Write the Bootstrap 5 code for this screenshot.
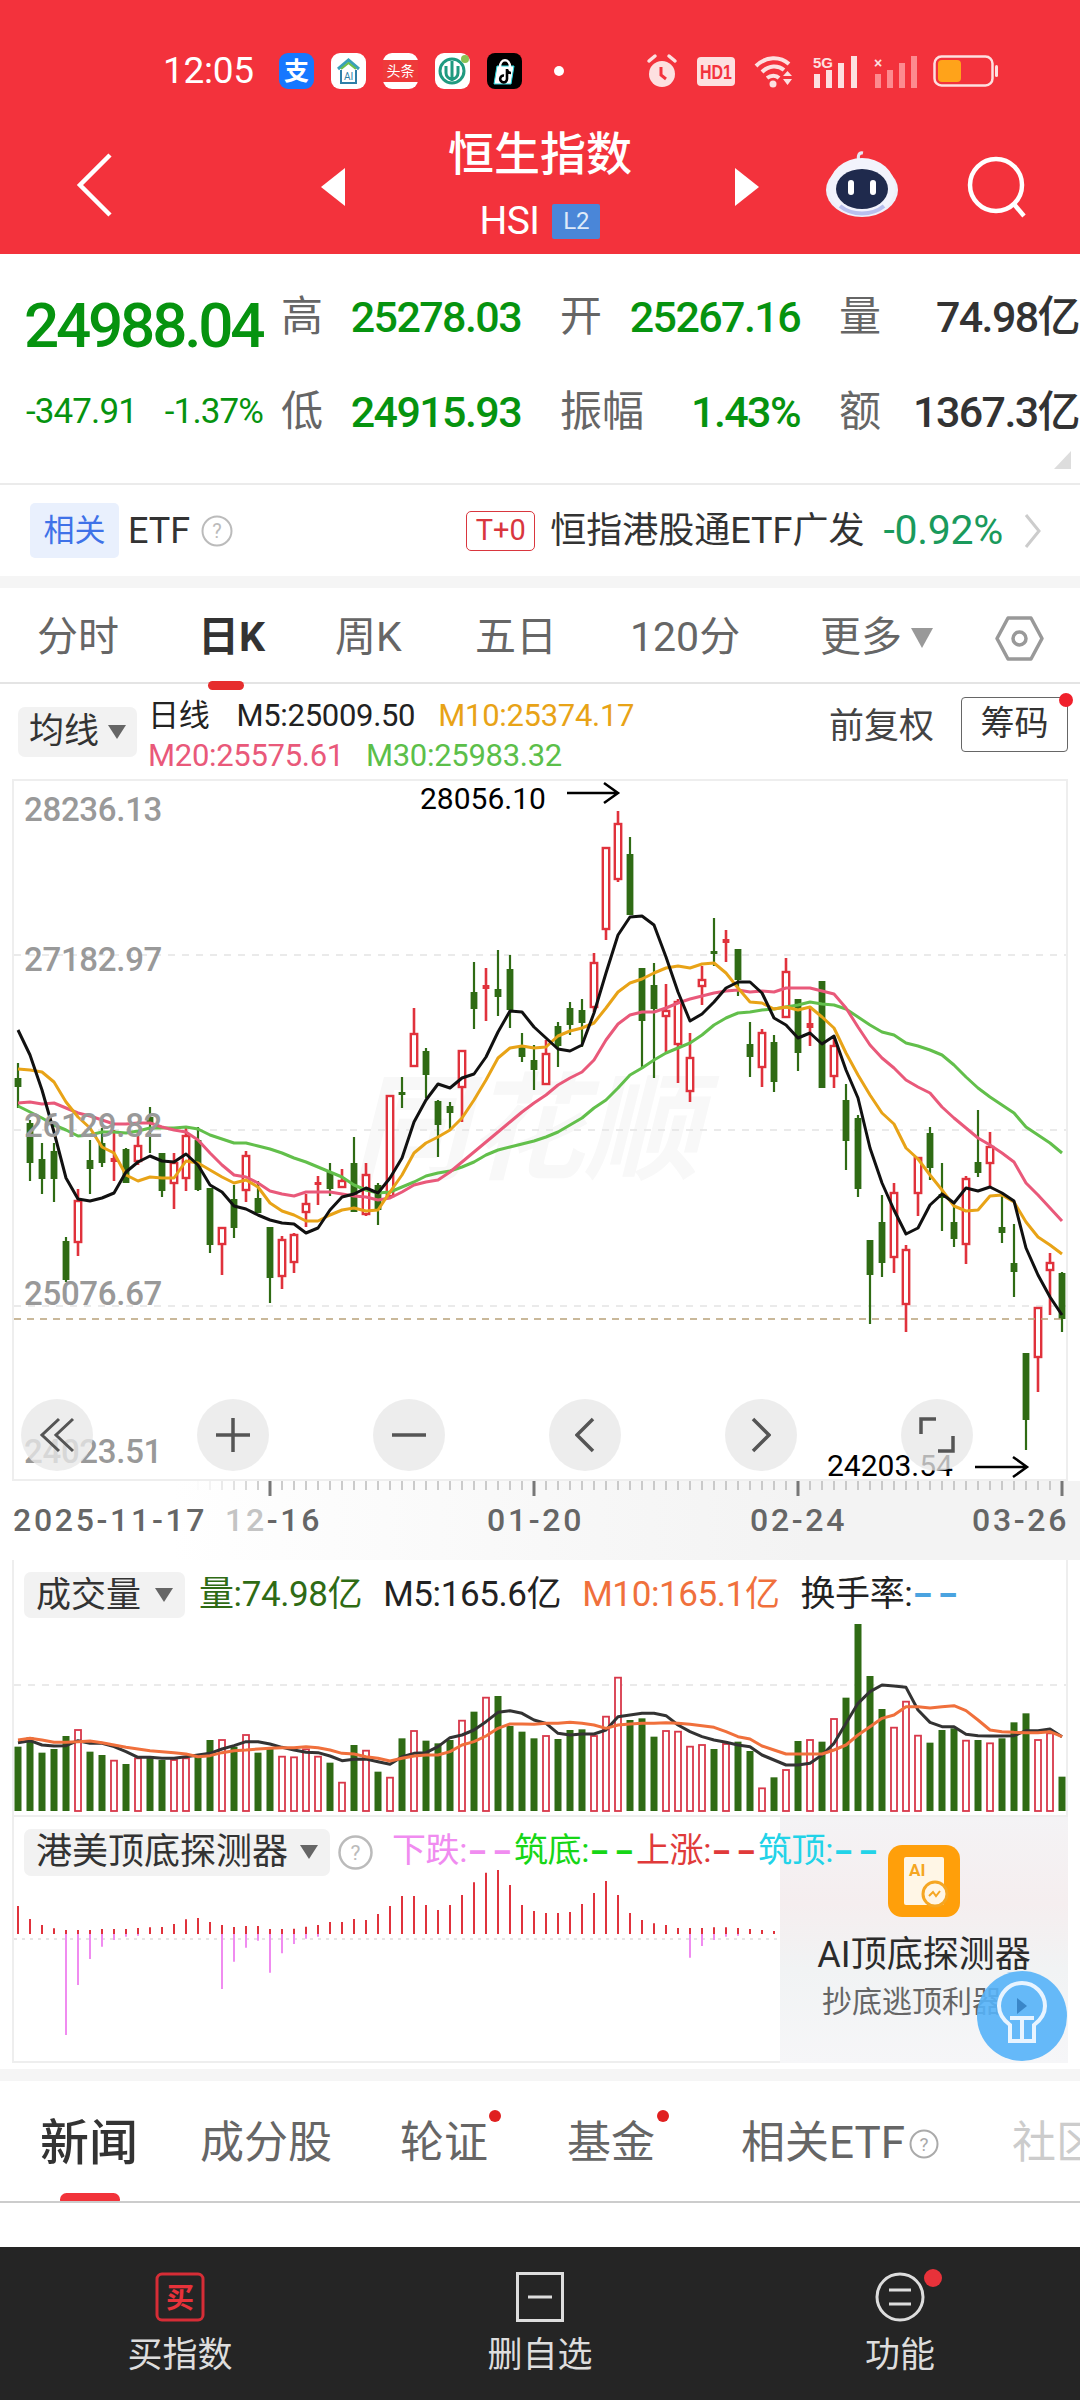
<!doctype html>
<html lang="zh-CN">
<head>
  <meta charset="utf-8">
  <meta name="viewport" content="width=device-width, initial-scale=1">
  <title>恒生指数</title>
  <link href="https://cdn.jsdelivr.net/npm/bootstrap@5.3.0/dist/css/bootstrap.min.css" rel="stylesheet">
  <style>
    body { width: 1080px; height: 2400px; margin: 0; overflow: hidden; background: #fff; color: #333;
      font-family: Roboto, "Noto Sans CJK SC", sans-serif; }

    .top-bar { height: 254px; background: #f3323c; color: #fff; }
    .status-row { height: 92px; padding: 50px 0 0 163px; }
    .status-time { font-size: 37px; line-height: 36px; width: 116px; letter-spacing: -.3px; }
    .app-ico { width: 35px; height: 36px; margin-right: 17px; display: block; }
    .status-dot { width: 10px; height: 10px; border-radius: 50%; background: #fff; margin: 0 82px 0 15px; }
    .sys-ico { display: block; margin-right: 19px; }
    .sys-tight { margin-right: 13px; }
    .sys-mid { margin-right: 15px; }
    .nav-row { height: 162px; padding-left: 76px; }
    .back-ico { margin: 60px 209px 0 0; }
    .title-block { width: 390px; margin-top: 33px; }
    .title-text { font-size: 46px; line-height: 58px; font-weight: 500; margin-bottom: 20px; }
    .code-text { font-size: 39px; line-height: 36px; letter-spacing: -.6px; }
    .l2-tag { background: #4a86d8; color: #dfeaf9; font-size: 24px; line-height: 35px; width: 48px; height: 35px; margin-left: 13px; text-align: center; border-radius: 2px; }
    .tri-ico { margin-top: 76px; }
    .robot-ico { margin: 58px 69px 0 67px; }
    .search-ico { margin-top: 64px; }

    .quote-box { height: 231px; padding: 38px 0 0 24px; border-bottom: 2px solid #ebebeb; }
    .quote-line { height: 50px; margin-bottom: 45px; }
    .quote-lead { width: 257px; flex-shrink: 0; }
    .last-price { font-size: 62px; line-height: 50px; font-weight: 500; letter-spacing: -3.2px; color: #06930f; padding-top: 18px; }
    .chg-num { font-size: 35px; color: #06930f; letter-spacing: -.9px; width: 239px; padding-left: 2px; }
    .quote-pair { width: 240px; margin-right: 39px; flex-shrink: 0; }
    .quote-label { font-size: 42px; color: #666; line-height: 50px; }
    .quote-val { font-size: 43px; font-weight: 500; letter-spacing: -1.6px; color: #06930f; }
    .quote-dark { color: #333; }
    .corner-tri { right: 9px; bottom: 14px; width: 0; height: 0; border-left: 17px solid transparent; border-bottom: 18px solid #ddd; }

    .etf-row { height: 91px; padding: 0 38px 0 30px; }
    .etf-tag { width: 89px; height: 55px; line-height: 55px; background: #e9f0fd; color: #3f72e8; font-size: 31px; text-align: center; border-radius: 5px; margin-right: 9px; }
    .etf-name { font-size: 36px; color: #333; }
    .help-ico { margin-left: 11px; display: block; }
    .t0-box { width: 69px; height: 40px; line-height: 37px; border: 1.5px solid #d9363e; border-radius: 5px; color: #d9363e; font-size: 29px; text-align: center; margin-right: 15px; }
    .etf-pct { font-size: 41px; color: #1a9a5c; margin: 0 21px 0 19px; letter-spacing: -.3px; }
    .gray-band { height: 12px; background: #f5f5f5; }

    .period-tabs { height: 96px; padding: 6px 0 0 37px; border-bottom: 2px solid #e4e4e4; display: grid; grid-template-columns: 161px 137px 140px 155px 190px 175px auto; align-items: center; }
    .period-tab { font-size: 41px; color: #666; white-space: nowrap; }
    .period-on { color: #333; font-weight: 700; justify-self: start; }
    .period-on::after { content: ""; position: absolute; left: 10px; bottom: -21px; width: 36px; height: 9px; border-radius: 5px; background: #e62e2e; }
    .caret-down { width: 0; height: 0; border-left: 11px solid transparent; border-right: 11px solid transparent; border-top: 20px solid #999; display: inline-block; margin-left: 9px; }

    .ind-row { height: 95px; padding: 0 12px 0 18px; }
    .pick-btn { background: #f2f2f2; border-radius: 7px; font-size: 35px; line-height: 1; color: #333; height: 50px; padding: 0 11px; flex-shrink: 0; }
    .pick-btn .caret-down { border-left-width: 9px; border-right-width: 9px; border-top-width: 14px; border-top-color: #666; }
    .legend-col { margin: 8px 0 0 11px; font-size: 31px; line-height: 40px; }
    .legend-col span { margin-right: 23px; letter-spacing: -.3px; }
    .legend-col .lg-day { margin-right: 27px; }
    .legend-col .lg-pink { margin-right: 22px; }
    .lg-dark { color: #222; }
    .lg-orange { color: #e8a317; }
    .lg-pink { color: #e9597a; }
    .lg-green { color: #5cbf4a; }
    .fq-text { font-size: 35px; color: #444; margin: 0 27px 8px 0; }
    .chip-btn { width: 107px; height: 55px; line-height: 50px; border: 1.5px solid #666; border-radius: 4px; font-size: 34px; text-align: center; color: #333; margin-bottom: 14px; }
    .chip-dot { right: -6px; top: -5px; width: 14px; height: 14px; border-radius: 50%; background: #f0202c; }

    .plot-box { margin: 0 12px; border: 2px solid #eee; background: #fff; }
    .k-box { height: 702px; }
    .plot-box svg { display: block; }
    .ctl-row { left: 7px; top: 618px; width: 952px; }
    .ctl-btn { width: 72px; height: 72px; border-radius: 50%; background: rgba(232,232,232,.78); }

    .axis-band { height: 79px; background: linear-gradient(to right, #fff 16%, #f3f3f3 75%); }
    .date-row { padding-left: 13px; display: grid; grid-template-columns: 212px 262px 263px 222px auto; font-size: 32px; line-height: 46px; color: #666; letter-spacing: 2.7px; font-weight: 500; white-space: nowrap; }
    .date-fade { color: #c4c4c4; }

    .vol-box { height: 257px; border-top: 0; padding-top: 12px; }
    .plot-head { height: 46px; padding-left: 10px; font-size: 35px; line-height: 46px; position: relative; z-index: 2; }
    .vol-head .pick-btn { height: 46px; width: 161px; margin-right: 14px; padding: 0 12px; }
    .vol-head > span { margin-right: 21px; letter-spacing: -.4px; white-space: nowrap; }
    .wide-dash { display: inline-block; transform: scaleX(1.6); transform-origin: left center; letter-spacing: 2px; font-weight: 700; }

    .det-box { height: 246px; border-top: 0; padding-top: 12px; margin-bottom: 6px; }
    .det-head .pick-btn { font-size: 36px; padding: 0 12px; width: 306px; height: 47px; }
    .det-help { margin: 0 19px 0 8px; flex-shrink: 0; }
    .det-tag { width: 122px; flex-shrink: 0; font-size: 34px; white-space: nowrap; letter-spacing: -.4px; margin-bottom: 4px; }

    .ai-panel { right: -2px; top: 0; width: 288px; height: 246px; background: linear-gradient(180deg, #f4f3f5 0%, #f5eeef 35%, #f1f3f4 62%, #f6f6f8 100%); }
    .ai-logo { left: 108px; top: 28px; }
    .ai-title { top: 118px; left: 0; right: 0; font-size: 36px; line-height: 40px; color: #2b2b2b; }
    .ai-sub { top: 167px; left: 42px; font-size: 30px; line-height: 36px; color: #666; white-space: nowrap; }
    .bulb-ico { left: 197px; top: 154px; }

    .news-tabs { height: 122px; padding-left: 40px; border-bottom: 2px solid #ccc; display: grid; grid-template-columns: 160px 200px 167px 174px 271px 100px; overflow: hidden; }
    .news-tab { font-size: 44px; line-height: 125px; color: #666; white-space: nowrap; }
    .news-on { font-size: 49px; font-weight: 500; color: #333; }
    .news-on::after { content: ""; position: absolute; left: 20px; bottom: 0; width: 60px; height: 13px; border-radius: 7px; background: #f2333a; }
    .news-dot { top: 29px; width: 12px; height: 12px; border-radius: 50%; background: #e02020; }
    .dot-a { left: 89px; }
    .dot-b { left: 90px; }
    .news-fade { color: #ccc; }
    .white-gap { height: 44px; }

    .foot-bar { height: 153px; background: #252525; color: #ddd; font-size: 35px; }
    .foot-item { width: 360px; padding-top: 25px; }
    .foot-item span { line-height: 40px; margin-top: 14px; }
    .foot-dot { left: 204px; top: 22px; width: 18px; height: 18px; border-radius: 50%; background: #e8323a; }
  </style>
</head>
<body>

  <div class="top-bar">
    <div class="status-row d-flex align-items-center">
      <div class="status-time">12:05</div>
      <svg class="app-ico" viewBox="0 0 35 36"><rect width="35" height="36" rx="9" fill="#1677ff"/><text x="17.5" y="27" font-size="25" font-weight="700" fill="#fff" text-anchor="middle">支</text></svg>
      <svg class="app-ico" viewBox="0 0 35 36"><rect width="35" height="36" rx="9" fill="#fff"/><path d="M7 16 17.5 7 28 16" fill="none" stroke="#3aa0b8" stroke-width="3"/><path d="M10 16 17.5 10 25 16" fill="none" stroke="#6cc04a" stroke-width="2"/><path d="M10 17v13h15V17" fill="none" stroke="#2f7fa8" stroke-width="2"/><text x="17.5" y="27" font-size="10" fill="#2f7fa8" text-anchor="middle">AI</text></svg>
      <svg class="app-ico" viewBox="0 0 35 36"><rect width="35" height="36" rx="9" fill="#fff"/><rect y="7" width="35" height="22" fill="#ee3a3a"/><text x="17.5" y="23" font-size="14" fill="#fff" text-anchor="middle">头条</text></svg>
      <svg class="app-ico" viewBox="0 0 35 36"><rect width="35" height="36" rx="9" fill="#fff"/><circle cx="17" cy="18" r="12" fill="none" stroke="#1f9a80" stroke-width="3"/><path d="M17 8v20M11 13v7a6 6 0 0 0 12 0v-7" fill="none" stroke="#1f9a80" stroke-width="3"/><circle cx="30" cy="6" r="4" fill="#8cc152"/></svg>
      <svg class="app-ico" viewBox="0 0 35 36"><rect width="35" height="36" rx="8" fill="#000"/><path d="M10 13h17l-3 18H7z" fill="#fff" stroke="#25d8e0" stroke-width="1"/><path d="M13 14c0-9 10-9 10 0" fill="none" stroke="#fff" stroke-width="2.5"/><path d="M20 16v10a3.4 3.4 0 1 1-3-3.4M20 17c1 2 2 3 4 3" fill="none" stroke="#000" stroke-width="2.6"/></svg>
      <div class="status-dot"></div>
      <svg class="sys-ico" width="32" height="36" viewBox="0 0 32 36"><circle cx="16" cy="21" r="13" fill="#fde0e0"/><path d="M3 8 9 3M29 8 23 3" stroke="#fde0e0" stroke-width="3.5" stroke-linecap="round"/><path d="M15 14v8l5 4" fill="none" stroke="#f3323c" stroke-width="3"/></svg>
      <svg class="sys-ico" width="38" height="29" viewBox="0 0 38 29"><rect width="38" height="29" rx="4" fill="#fde0e0"/><text x="3" y="22" font-size="20" font-weight="700" font-family="Liberation Sans" fill="#f3323c" textLength="32" lengthAdjust="spacingAndGlyphs">HD1</text></svg>
      <svg class="sys-ico" width="40" height="33" viewBox="0 0 40 33"><path d="M2 11C12 1 26 1 35 9M8 17C15 10 24 10 30 15M13 23c4-3 9-3 12 0" fill="none" stroke="#fde0e0" stroke-width="4"/><circle cx="19" cy="29" r="3.5" fill="#fde0e0"/><path d="M29 21h9l-4.500-5zM29 24h9l-4.500 6z" fill="#fde0e0"/></svg>
      <svg class="sys-ico sys-tight" width="48" height="33" viewBox="0 0 48 33"><text x="0" y="13" font-size="15" font-weight="700" font-family="Liberation Sans" fill="#fde0e0">5G</text><rect x="1" y="19" width="6" height="14" fill="#fde0e0"/><rect x="13" y="15" width="6" height="18" fill="#fde0e0"/><rect x="25" y="8" width="6" height="25" fill="#fde0e0"/><rect x="38" y="1" width="6" height="32" fill="#fde0e0"/></svg>
      <svg class="sys-ico sys-mid" width="44" height="33" viewBox="0 0 44 33"><text x="0" y="13" font-size="14" font-weight="700" font-family="Liberation Sans" fill="#fde0e0">×</text><g fill="#fd8a8f"><rect x="1" y="19" width="6" height="14"/><rect x="13" y="15" width="6" height="18"/><rect x="25" y="8" width="6" height="25"/><rect x="37" y="1" width="6" height="32"/></g></svg>
      <svg class="sys-ico" width="66" height="32" viewBox="0 0 66 32"><rect x="1.500" y="1.500" width="58" height="29" rx="7" fill="none" stroke="#fde0e0" stroke-width="2.500"/><rect x="5" y="5" width="23" height="22" rx="4" fill="#ffa31a"/><rect x="62" y="10" width="3" height="12" rx="1.500" fill="#fde0e0"/></svg>
    </div>
    <div class="nav-row d-flex align-items-start">
      <svg class="back-ico" width="36" height="66" viewBox="0 0 36 66"><path d="M34 3 4 33l30 30" fill="none" stroke="#fff" stroke-width="4.500"/></svg>
      <svg class="tri-ico" width="24" height="38" viewBox="0 0 24 38"><path d="M24 0v38L0 19z" fill="#fff"/></svg>
      <div class="title-block text-center">
        <div class="title-text">恒生指数</div>
        <div class="d-flex justify-content-center align-items-center"><span class="code-text">HSI</span><span class="l2-tag">L2</span></div>
      </div>
      <svg class="tri-ico" width="24" height="38" viewBox="0 0 24 38"><path d="M0 0v38l24-19z" fill="#fff"/></svg>
      <svg class="robot-ico" width="72" height="68" viewBox="0 0 72 68"><path d="M34 12c-3-4-2-10 3-9" fill="none" stroke="#e6e8f4" stroke-width="3"/><ellipse cx="36" cy="40" rx="36" ry="27" fill="#eef0fa"/><ellipse cx="36" cy="37" rx="33" ry="29" fill="#f2f3fc"/><ellipse cx="36" cy="39" rx="26" ry="20" fill="#1f2a4d"/><rect x="22" y="30" width="6" height="15" rx="3" fill="#fff"/><rect x="44" y="30" width="6" height="15" rx="3" fill="#fff"/><path d="M14 56c12 10 32 10 44 0" fill="none" stroke="#b9c0ee" stroke-width="4"/></svg>
      <svg class="search-ico" width="60" height="62" viewBox="0 0 60 62"><circle cx="29" cy="29" r="26" fill="none" stroke="#fff" stroke-width="4.500"/><path d="M46 47 57 60" stroke="#fff" stroke-width="4.500"/></svg>
    </div>
  </div>

  <div class="quote-box position-relative">
    <div class="quote-line d-flex align-items-center">
      <div class="quote-lead last-price">24988.04</div>
      <div class="quote-pair d-flex justify-content-between align-items-center"><span class="quote-label">高</span><span class="quote-val">25278.03</span></div>
      <div class="quote-pair d-flex justify-content-between align-items-center"><span class="quote-label">开</span><span class="quote-val">25267.16</span></div>
      <div class="quote-pair d-flex justify-content-between align-items-center"><span class="quote-label">量</span><span class="quote-val quote-dark">74.98亿</span></div>
    </div>
    <div class="quote-line d-flex align-items-center">
      <div class="quote-lead"><div class="chg-num d-flex justify-content-between"><span>-347.91</span><span>-1.37%</span></div></div>
      <div class="quote-pair d-flex justify-content-between align-items-center"><span class="quote-label">低</span><span class="quote-val">24915.93</span></div>
      <div class="quote-pair d-flex justify-content-between align-items-center"><span class="quote-label">振幅</span><span class="quote-val">1.43%</span></div>
      <div class="quote-pair d-flex justify-content-between align-items-center"><span class="quote-label">额</span><span class="quote-val quote-dark">1367.3亿</span></div>
    </div>
    <div class="corner-tri position-absolute"></div>
  </div>

  <div class="etf-row d-flex align-items-center">
    <div class="etf-tag">相关</div>
    <span class="etf-name">ETF</span>
    <svg class="help-ico" width="32" height="32" viewBox="0 0 32 32"><circle cx="16" cy="16" r="14.500" fill="none" stroke="#bbb" stroke-width="2"/><text x="16" y="23" font-size="20" fill="#bbb" text-anchor="middle">?</text></svg>
    <div class="t0-box ms-auto">T+0</div>
    <span class="etf-name">恒指港股通ETF广发</span>
    <span class="etf-pct">-0.92%</span>
    <svg width="18" height="36" viewBox="0 0 18 36"><path d="M2 2 15 18 2 34" fill="none" stroke="#ccc" stroke-width="3"/></svg>
  </div>
  <div class="gray-band"></div>

  <div class="period-tabs">
    <span class="period-tab">分时</span>
    <span class="period-tab period-on position-relative">日K</span>
    <span class="period-tab">周K</span>
    <span class="period-tab">五日</span>
    <span class="period-tab">120分</span>
    <span class="period-tab d-flex align-items-center">更多<i class="caret-down"></i></span>
    <svg width="49" height="45" viewBox="0 0 49 45"><path d="M2 22.500 13 2h23l11 20.500L36 43H13z" fill="none" stroke="#999" stroke-width="3.500" stroke-linejoin="round"/><circle cx="24.500" cy="22.500" r="6.500" fill="none" stroke="#999" stroke-width="3.500"/></svg>
  </div>

  <div class="ind-row d-flex align-items-center">
    <div class="pick-btn d-flex align-items-center">均线<i class="caret-down"></i></div>
    <div class="legend-col">
      <div><span class="lg-dark lg-day">日线</span><span class="lg-dark">M5:25009.50</span><span class="lg-orange">M10:25374.17</span></div>
      <div><span class="lg-pink">M20:25575.61</span><span class="lg-green">M30:25983.32</span></div>
    </div>
    <span class="fq-text ms-auto">前复权</span>
    <div class="chip-btn position-relative">筹码<i class="chip-dot position-absolute"></i></div>
  </div>

  <div class="plot-box k-box position-relative">
    <svg id="kChart" width="1052" height="698" viewBox="14 781 1052 698"></svg>
    <div class="ctl-row position-absolute d-flex justify-content-between">
      <div class="ctl-btn d-flex align-items-center justify-content-center"><svg width="36" height="36" viewBox="0 0 36 36"><path d="M20 2 3 18l17 16M34 2 17 18l17 16" fill="none" stroke="#555" stroke-width="3"/></svg></div>
      <div class="ctl-btn d-flex align-items-center justify-content-center"><svg width="34" height="34" viewBox="0 0 34 34"><path d="M0 17h34M17 0v34" fill="none" stroke="#555" stroke-width="3.500"/></svg></div>
      <div class="ctl-btn d-flex align-items-center justify-content-center"><svg width="34" height="34" viewBox="0 0 34 34"><path d="M0 17h34" fill="none" stroke="#555" stroke-width="3.500"/></svg></div>
      <div class="ctl-btn d-flex align-items-center justify-content-center"><svg width="20" height="36" viewBox="0 0 20 36"><path d="M18 2 2 18l16 16" fill="none" stroke="#555" stroke-width="3.500"/></svg></div>
      <div class="ctl-btn d-flex align-items-center justify-content-center"><svg width="20" height="36" viewBox="0 0 20 36"><path d="M2 2l16 16L2 34" fill="none" stroke="#555" stroke-width="3.500"/></svg></div>
      <div class="ctl-btn d-flex align-items-center justify-content-center"><svg width="38" height="38" viewBox="0 0 38 38"><path d="M18 3H3v15M20 35h15V20" fill="none" stroke="#555" stroke-width="3.500"/></svg></div>
    </div>
  </div>

  <div class="axis-band">
    <svg id="axisTicks" class="d-block" width="1080" height="16" viewBox="0 0 1080 16"></svg>
    <div class="date-row">
      <span>2025-11-17</span><span><span class="date-fade">12</span>-16</span><span>01-20</span><span>02-24</span><span>03-26</span>
    </div>
  </div>

  <div class="plot-box vol-box">
    <div class="plot-head vol-head d-flex align-items-center">
      <div class="pick-btn d-flex align-items-center justify-content-between">成交量<i class="caret-down"></i></div>
      <span style="color:#2f6b14">量:74.98亿</span>
      <span class="lg-dark">M5:165.6亿</span>
      <span style="color:#f0703c">M10:165.1亿</span>
      <span class="lg-dark">换手率:<span class="wide-dash" style="color:#4aa3e0">--</span></span>
    </div>
    <svg id="volChart" width="1052" height="197" viewBox="14 1618 1052 197"></svg>
  </div>

  <div class="plot-box det-box position-relative">
    <div class="plot-head det-head d-flex align-items-center">
      <div class="pick-btn d-flex align-items-center justify-content-between">港美顶底探测器<i class="caret-down"></i></div>
      <svg class="det-help" width="35" height="35" viewBox="0 0 35 35"><circle cx="17.500" cy="17.500" r="16" fill="none" stroke="#bbb" stroke-width="2.500"/><text x="17.500" y="25" font-size="21" fill="#bbb" text-anchor="middle">?</text></svg>
      <span class="det-tag" style="color:#f08cf0">下跌:<span class="wide-dash">--</span></span>
      <span class="det-tag" style="color:#16d616">筑底:<span class="wide-dash">--</span></span>
      <span class="det-tag" style="color:#e03a3a">上涨:<span class="wide-dash">--</span></span>
      <span class="det-tag" style="color:#22d3e8">筑顶:<span class="wide-dash">--</span></span>
    </div>
    <svg id="detChart" width="1052" height="183" viewBox="14 1875 1052 183" style="overflow:visible"></svg>
    <div class="ai-panel position-absolute">
      <svg class="ai-logo position-absolute" width="72" height="72" viewBox="0 0 72 72"><rect width="72" height="72" rx="14" fill="#ff9f0a"/><rect x="16" y="12" width="40" height="48" rx="2" fill="#fff6e6"/><text x="21" y="31" font-size="17" font-weight="700" fill="#f5a623">AI</text><circle cx="47" cy="49" r="12" fill="#fff6e6" stroke="#f5a623" stroke-width="3"/><path d="M41 51l4-4 3 4 4-5" fill="none" stroke="#f5a623" stroke-width="2"/></svg>
      <div class="ai-title position-absolute text-center">AI顶底探测器</div>
      <div class="ai-sub position-absolute">抄底逃顶利器</div>
      <svg class="bulb-ico position-absolute" width="90" height="90" viewBox="0 0 90 90"><circle cx="45" cy="45" r="45" fill="#55b2f8" fill-opacity=".9"/><path d="M33 54c-8-6-11-12-11-19a23 23 0 0 1 46 0c0 7-3 13-11 19v16H33z" fill="none" stroke="#e8f4ff" stroke-width="4"/><path d="M33 47h24M45 47v23M33 70h24" fill="none" stroke="#e8f4ff" stroke-width="4"/><path d="M40 27l10 8-10 8z" fill="#3a86c8"/></svg>
    </div>
  </div>
  <div class="gray-band"></div>

  <div class="news-tabs">
    <span class="news-tab news-on position-relative">新闻</span>
    <span class="news-tab">成分股</span>
    <span class="news-tab position-relative">轮证<i class="news-dot dot-a position-absolute"></i></span>
    <span class="news-tab position-relative">基金<i class="news-dot dot-b position-absolute"></i></span>
    <span class="news-tab d-flex align-items-center">相关ETF<svg class="ms-1" width="30" height="30" viewBox="0 0 30 30"><circle cx="15" cy="15" r="13.500" fill="none" stroke="#aaa" stroke-width="2"/><text x="15" y="22" font-size="19" fill="#aaa" text-anchor="middle">?</text></svg></span>
    <span class="news-tab news-fade">社区</span>
  </div>
  <div class="white-gap"></div>

  <div class="foot-bar d-flex">
    <div class="foot-item d-flex flex-column align-items-center">
      <svg width="50" height="50" viewBox="0 0 50 50"><rect x="2" y="2" width="46" height="46" rx="5" fill="none" stroke="#d62d36" stroke-width="3"/><text x="25" y="36" font-size="28" font-weight="700" fill="#e8323a" text-anchor="middle">买</text></svg>
      <span>买指数</span>
    </div>
    <div class="foot-item d-flex flex-column align-items-center">
      <svg width="48" height="50" viewBox="0 0 48 50"><rect x="1.500" y="1.500" width="45" height="47" fill="none" stroke="#ddd" stroke-width="3"/><path d="M12 25h24" stroke="#ddd" stroke-width="3"/></svg>
      <span>删自选</span>
    </div>
    <div class="foot-item d-flex flex-column align-items-center position-relative">
      <svg width="50" height="50" viewBox="0 0 50 50"><circle cx="25" cy="25" r="23" fill="none" stroke="#ddd" stroke-width="3"/><path d="M14 18h22M14 32h22" stroke="#ddd" stroke-width="3"/></svg>
      <i class="foot-dot position-absolute"></i>
      <span>功能</span>
    </div>
  </div>

  <script>
    const GREEN = "#2f6b14", RED = "#e0323c";
    const xAt = i => 18 + 12 * i;

    // hi, body top, body bottom, lo, up? (read off the picture, in page pixels)
    const candles = [
      [1063,1078,1087,1108,0],[1120,1123,1163,1181,0],[1143,1159,1179,1194,0],[1143,1151,1179,1202,0],
      [1237,1241,1280,1282,0],[1189,1200,1243,1256,1],[1140,1160,1169,1194,0],[1128,1143,1163,1167,0],
      [1130,1158,1162,1181,1],[1148,1149,1183,1183,0],[1130,1145,1162,1165,1],[1107,1117,1123,1153,0],
      [1153,1153,1191,1197,0],[1153,1162,1184,1209,1],[1127,1135,1179,1191,1],[1127,1140,1190,1191,0],
      [1188,1188,1245,1253,0],[1227,1227,1245,1275,1],[1185,1199,1228,1238,0],[1151,1155,1191,1202,1],
      [1181,1198,1213,1213,0],[1227,1227,1278,1303,0],[1236,1239,1277,1289,1],[1233,1234,1263,1273,1],
      [1194,1203,1213,1227,1],[1176,1182,1185,1205,1],[1163,1172,1189,1196,0],[1169,1180,1188,1188,1],
      [1137,1163,1212,1212,0],[1163,1174,1215,1216,1],[1183,1185,1210,1225,0],[1095,1095,1197,1198,1],
      [1077,1092,1094,1108,0],[1008,1033,1067,1067,1],[1048,1051,1075,1098,0],[1100,1101,1125,1157,0],
      [1102,1106,1113,1130,0],[1050,1050,1088,1122,1],[962,992,1009,1029,0],[968,985,989,1021,1],
      [950,989,997,1016,0],[955,969,1010,1028,0],[1033,1047,1057,1062,0],[1045,1060,1070,1090,0],
      [1040,1053,1085,1085,1],[1022,1026,1046,1067,0],[1002,1008,1025,1035,0],[999,1010,1023,1047,0],
      [953,962,1008,1012,1],[847,847,930,940,1],[811,823,880,882,1],[837,854,915,915,0],
      [968,968,1021,1067,0],[963,985,1009,1078,0],[984,1010,1017,1052,1],[999,1001,1045,1083,1],
      [1033,1057,1092,1102,1],[966,979,987,1005,1],[918,951,953,966,0],[930,939,943,962,1],
      [949,949,980,996,0],[1022,1044,1057,1077,0],[1029,1032,1068,1087,1],[1035,1042,1082,1092,0],
      [958,971,1018,1018,1],[999,999,1053,1071,0],[1007,1023,1028,1046,1],[981,981,1088,1088,0],
      [1038,1045,1077,1088,1],[1084,1100,1141,1170,0],[1115,1118,1189,1197,0],[1240,1240,1275,1324,0],
      [1195,1222,1263,1277,0],[1183,1192,1258,1273,1],[1245,1249,1305,1332,1],[1157,1157,1194,1216,1],
      [1127,1133,1168,1180,0],[1163,1194,1198,1231,0],[1203,1222,1239,1247,0],[1176,1178,1245,1264,1],
      [1110,1162,1173,1177,0],[1132,1146,1164,1187,1],[1194,1227,1233,1243,0],[1224,1263,1272,1297,0],
      [1353,1353,1420,1450,0],[1307,1307,1358,1392,1],[1253,1262,1271,1315,1],[1272,1273,1319,1332,0]
    ];

    const ma5 = [1030,1055,1090,1132,1178,1199,1201,1198,1193,1172,1162,1156,1161,1162,1154,1165,1185,1192,1206,1209,1215,1220,1223,1224,1233,1228,1210,1197,1194,1188,1193,1178,1158,1122,1100,1084,1088,1078,1074,1057,1032,1011,1012,1027,1038,1049,1051,1045,1013,973,935,917,916,925,957,992,1021,1014,1002,988,982,982,993,1018,1025,1038,1033,1044,1036,1070,1098,1148,1183,1210,1234,1228,1205,1194,1203,1188,1191,1187,1193,1201,1248,1275,1297,1315];
    const ma10 = [1069,1070,1072,1082,1102,1117,1128,1147,1153,1175,1181,1177,1178,1178,1161,1163,1170,1177,1183,1180,1187,1203,1211,1215,1221,1221,1215,1210,1208,1211,1210,1192,1175,1153,1143,1137,1130,1118,1100,1080,1058,1048,1046,1048,1047,1036,1031,1028,1023,1008,992,983,979,973,968,966,968,964,963,973,988,1002,1003,1009,1007,1010,1007,1017,1028,1053,1075,1095,1113,1124,1148,1159,1175,1190,1206,1211,1210,1196,1195,1202,1222,1237,1245,1254];
    const ma20 = [1103,1102,1104,1103,1108,1113,1116,1120,1124,1124,1123,1123,1127,1130,1132,1140,1153,1165,1175,1177,1183,1191,1194,1196,1192,1192,1192,1194,1196,1197,1200,1198,1192,1185,1182,1180,1172,1162,1152,1142,1132,1122,1112,1103,1095,1085,1078,1072,1060,1040,1024,1015,1012,1012,1008,1003,999,996,993,991,990,992,991,992,988,988,988,991,994,1008,1027,1045,1058,1068,1080,1087,1093,1107,1118,1128,1138,1145,1153,1162,1183,1195,1208,1221];
    const ma30 = [1106,1112,1118,1125,1130,1136,1135,1132,1132,1133,1131,1128,1128,1128,1127,1129,1135,1139,1143,1143,1146,1149,1153,1158,1162,1167,1172,1177,1185,1190,1193,1192,1187,1182,1176,1173,1171,1167,1162,1155,1150,1147,1144,1141,1137,1132,1125,1118,1108,1100,1088,1075,1068,1060,1053,1048,1043,1035,1025,1018,1013,1012,1010,1009,1007,1005,1002,1004,1005,1009,1017,1025,1032,1035,1043,1046,1050,1055,1065,1077,1088,1097,1105,1113,1127,1135,1143,1153];

    // volume: top of each bar and the two averages, y measured as 1550 + v/3
    const volTop = [590,562,608,597,558,540,605,615,632,642,625,622,630,630,625,620,570,570,590,555,608,595,620,622,598,620,638,698,585,602,665,683,565,543,572,580,570,512,485,443,438,528,545,565,558,567,540,538,558,500,383,510,505,560,543,545,590,585,597,582,575,603,715,682,660,573,570,575,507,443,222,378,477,533,455,557,578,540,535,572,570,580,565,517,490,570,550,680];
    const volUp = candles.map(c => c[4]);
    const volMa5 = [578,572,585,588,587,572,580,580,590,605,622,622,625,625,620,615,610,597,587,575,575,582,592,600,607,608,618,632,628,627,635,643,620,610,608,590,563,555,540,515,487,482,490,510,520,550,555,552,552,540,500,495,490,490,497,525,545,560,570,577,585,590,615,630,645,645,640,615,580,520,460,425,405,408,412,480,517,530,530,553,557,558,558,557,542,542,537,560];
    const volMa10 = [570,565,570,577,577,575,573,578,585,592,597,602,605,608,612,620,617,608,602,600,597,595,593,593,590,593,600,610,612,620,625,633,625,618,615,615,605,585,575,558,535,522,522,523,520,520,517,520,525,535,525,522,520,520,518,520,523,527,532,545,560,567,588,600,612,612,612,612,600,585,555,530,505,495,470,470,474,470,467,482,510,540,545,547,548,548,545,560];

    // detector: red tops and pink ends, y measured as 1820 + v/3
    const detRed = [258,297,315,325,330,330,330,327,327,327,324,322,321,312,298,294,306,315,321,318,318,327,327,326,320,315,306,306,297,300,282,258,228,228,255,270,255,225,187,158,150,195,255,273,279,279,276,252,219,183,225,279,300,310,315,324,324,324,322,322,324,327,330,333];
    const detPink = {4:645,5:495,6:417,7:380,8:360,9:350,10:347,17:507,18:425,19:383,20:362,21:458,22:400,23:372,24:356,25:350,56:413,57:378,58:360,59:350,60:347};

    const line = (arr, color, w, mapY) => {
      const pts = arr.map((y, i) => xAt(i) + "," + (mapY ? mapY(y) : y)).join(" ");
      return `<polyline points="${pts}" fill="none" stroke="${color}" stroke-width="${w}" stroke-linejoin="round"/>`;
    };

    // candle chart
    let k = `<text x="352" y="1170" font-size="116" font-weight="700" font-style="italic" fill="#f8f8f8">同花顺</text>`;
    [955, 1130, 1306].forEach(y => {
      k += `<line x1="14" x2="1066" y1="${y}" y2="${y}" stroke="#e4e4e4" stroke-width="1.500" stroke-dasharray="7 7"/>`;
    });
    candles.forEach((c, i) => {
      const x = xAt(i), color = c[4] ? RED : GREEN;
      k += `<line x1="${x}" x2="${x}" y1="${c[0]}" y2="${c[3]}" stroke="${color}" stroke-width="${c[4] ? 2.6 : 2.2}"/>`;
      if (c[4] && c[2] - c[1] > 5) {
        k += `<rect x="${x - 3.2}" y="${c[1] + 1}" width="6.400" height="${c[2] - c[1] - 2}" fill="#fff" stroke="${color}" stroke-width="2.400"/>`;
      } else {
        k += `<rect x="${x - 3.4}" y="${c[1]}" width="6.800" height="${Math.max(c[2] - c[1], 3)}" fill="${color}"/>`;
      }
    });
    k += `<line x1="14" x2="1066" y1="1319" y2="1319" stroke="#b8a17a" stroke-width="1.500" stroke-dasharray="7 6"/>`;
    k += line(ma30, "#62bf4b", 3) + line(ma20, "#e9597a", 3) + line(ma10, "#e8a317", 3) + line(ma5, "#111", 3);
    [["28236.13", 809], ["27182.97", 959], ["26129.82", 1125], ["25076.67", 1293], ["24023.51", 1451]].forEach(t => {
      k += `<text x="24" y="${t[1] + 12}" font-size="33" font-weight="500" letter-spacing="-.3" fill="#999">${t[0]}</text>`;
    });
    k += `<text x="420" y="809" font-size="30" fill="#000">28056.10</text>`;
    k += `<path d="M567 793h50M604 783l14 10-14 10" fill="none" stroke="#000" stroke-width="2.500"/>`;
    k += `<text x="827" y="1476" font-size="30" fill="#000">24203.54</text>`;
    k += `<path d="M975 1467h51M1013 1457l14 10-14 10" fill="none" stroke="#000" stroke-width="2.500"/>`;
    document.getElementById("kChart").innerHTML = k;

    // axis ticks
    let t = "";
    candles.forEach((c, i) => {
      const x = xAt(i);
      const major = [21, 43, 65, 87].includes(i);
      const alpha = Math.min(1, Math.max(0, (x - 195) / 70));
      t += `<line x1="${x}" x2="${x}" y1="0" y2="${major ? 15 : 9}" stroke="${major ? "#777" : "#bbb"}" stroke-width="${major ? 3 : 1.500}" opacity="${alpha}"/>`;
    });
    document.getElementById("axisTicks").innerHTML = t;

    // volume chart
    const volY = v => 1550 + v / 3;
    let v = `<line x1="14" x2="1066" y1="1685" y2="1685" stroke="#e4e4e4" stroke-width="1.500" stroke-dasharray="7 7"/>`;
    volTop.forEach((top, i) => {
      const x = xAt(i), y = volY(top);
      if (volUp[i]) {
        v += `<rect x="${x - 3}" y="${y}" width="6" height="${1811 - y}" fill="#fff" stroke="#d8384a" stroke-width="1.800"/>`;
      } else {
        v += `<rect x="${x - 3.5}" y="${y}" width="7" height="${1811 - y}" fill="${GREEN}"/>`;
      }
    });
    v += line(volMa5, "#333", 3, volY) + line(volMa10, "#f0703c", 3, volY);
    document.getElementById("volChart").innerHTML = v;

    // detector chart
    const detY = n => 1820 + n / 3;
    let d = `<line x1="14" x2="780" y1="1939" y2="1939" stroke="#ddd" stroke-width="1.500" stroke-dasharray="3 5"/>`;
    detRed.forEach((top, i) => {
      const x = xAt(i);
      if (detPink[i]) d += `<line x1="${x}" x2="${x}" y1="1930" y2="${detY(detPink[i])}" stroke="#f08cf0" stroke-width="2"/>`;
      d += `<line x1="${x}" x2="${x}" y1="${detY(top)}" y2="1934" stroke="#e0323c" stroke-width="2"/>`;
    });
    document.getElementById("detChart").innerHTML = d;
  </script>

  <script src="https://cdn.jsdelivr.net/npm/bootstrap@5.3.0/dist/js/bootstrap.bundle.min.js"></script>
</body>
</html>
